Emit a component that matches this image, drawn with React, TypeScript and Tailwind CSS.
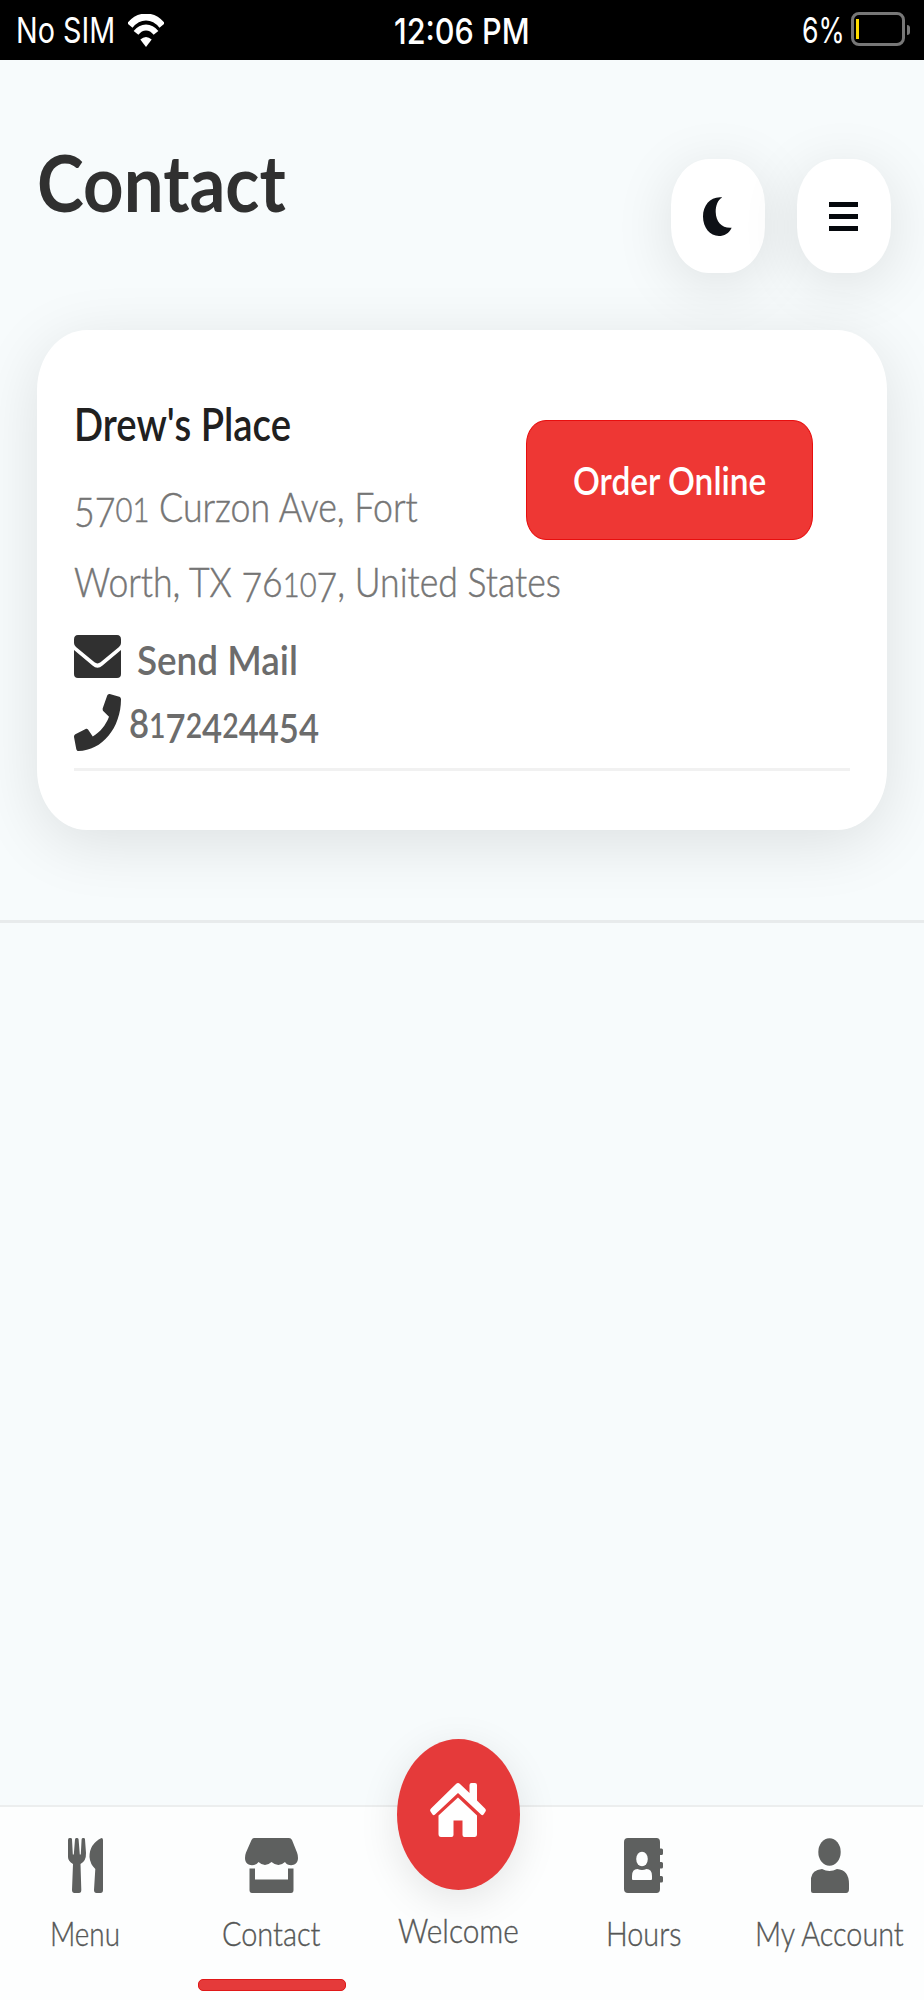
import { useLayoutEffect, useRef, type ReactNode } from "react";
import { FaPhone } from "react-icons/fa";
import clsx from "clsx";

// Condenses one line of text so that it fills the width of its box
function Fit({ className, children }: { className: string; children: ReactNode }) {
  const ref = useRef<HTMLSpanElement>(null);

  useLayoutEffect(() => {
    const el = ref.current;
    if (!el || !el.parentElement) return;
    el.style.transform = `scaleX(${el.parentElement.clientWidth / el.offsetWidth})`;
  });

  return (
    <div className={clsx("whitespace-nowrap", className)}>
      <span ref={ref} className="block w-max origin-left">
        {children}
      </span>
    </div>
  );
}

// Old-style figures: 0-2 sit at x-height, 3 4 5 7 9 hang below the baseline
function Digits({ value }: { value: string }) {
  return (
    <>
      {value.split("").map((d, i) => (
        <span
          key={i}
          className={clsx(
            "leading-[0]",
            "012".includes(d) && "text-[0.82em]",
            "34579".includes(d) && "align-[-0.13em]"
          )}
        >
          {d}
        </span>
      ))}
    </>
  );
}

function WifiIcon() {
  return (
    <svg viewBox="0 0 36 33" className="h-[33px] w-[36px]" fill="none" stroke="#fff">
      <path d="M1.8 11.5C11 .2 25 .2 34.2 11.5" strokeWidth="7" />
      <path d="M8 18.8C13.6 11.6 22.4 11.6 28 18.8" strokeWidth="6" />
      <path d="M12.3 25.5Q18 20.5 23.7 25.5L18 33Z" fill="#fff" stroke="none" />
    </svg>
  );
}

function MoonIcon() {
  return (
    <svg viewBox="0 0 29 39" className="mr-[2px] h-[39px] w-[29px]" fill="#0e1116">
      <path d="M19.300 .5C14.500 3 12.700 9 12.700 15C13 25 19 31.500 28.700 30.700C26 36.500 21 39 16 39C7 39 0 30.500 0 19.500C0 8 8 -1 19.300 .5Z" />
    </svg>
  );
}

function EnvelopeIcon() {
  return (
    <svg viewBox="0 0 47 43" className="h-[43px] w-[47px]" fill="#303030">
      <path d="M4 0H43Q47 0 47 4.5V8Q47 10.500 45 12L26.500 27.300Q23.500 29.500 20.500 27.300L2 12Q0 10.500 0 8V4.500Q0 0 4 0Z" />
      <path d="M0 15L18.500 30.500Q23.500 35 28.500 30.500L47 15V39Q47 43 43 43H4Q0 43 0 39Z" />
    </svg>
  );
}

function CutleryIcon() {
  return (
    <svg viewBox="0 0 35 55" className="h-[55px] w-[35px]" fill="#5e605f">
      <path d="M1.500 0H3Q4 0 4 1.500L4.800 16.500H5.800L7 1.500Q7 0 8.300 0H9.300Q10.500 0 10.600 1.500L11.800 16.500H12.800L13.600 1.500Q13.600 0 14.800 0H16Q17 0 17 1.500L18 15Q18.300 23 12.500 26L13.300 52Q13.300 55 11 55H6.500Q4 55 4 52L5 26Q0 23 0 19V2Q0 0 1.500 0Z" />
      <path d="M33.500 0Q35 0 35 2V52Q35 55 32.500 55H28.500Q26 55 26 52L27.300 31Q22 26 21.500 19Q21.300 6 33.500 0Z" />
    </svg>
  );
}

function StoreIcon() {
  return (
    <svg viewBox="0 0 53 55" className="h-[55px] w-[53px]" fill="#5e605f">
      <path d="M9 0H44Q46 0 47 2L52 14.500Q53 17 53 20C53 28.500 43 29 40 24Q33.500 30 26.500 24Q20 30 13.500 24C10 29 0 28.500 0 20Q0 17 1 14.500L6.500 2Q7.500 0 9 0Z" />
      <path d="M4.500 30.500H10V41.500H43V30.500H48.500V52Q48.500 55 46 55H7Q4.500 55 4.500 52Z" />
    </svg>
  );
}

function BookIcon() {
  return (
    <svg viewBox="0 0 39 55" className="h-[55px] w-[39px]" fill="#5e605f">
      <path d="M4 0H32.500Q36 0 36 4V10.500H37.500Q39 10.500 39 12V15.500Q39 17 37.500 17H36V24H37.500Q39 24 39 25.500V29Q39 30.500 37.500 30.500H36V38H37.500Q39 38 39 39.500V43Q39 44.500 37.500 44.500H36V51Q36 55 32.500 55H4Q0 55 0 51V4Q0 0 4 0Z" />
      <ellipse cx="18" cy="21" rx="5.800" ry="7.300" fill="#fdfefe" />
      <path d="M8 41V38Q8 31 13.500 31Q18 33 22.500 31Q28 31 28 38V41Q28 42 27 42H9Q8 42 8 41Z" fill="#fdfefe" />
    </svg>
  );
}

function PersonIcon() {
  return (
    <svg viewBox="0 0 38 55" className="h-[55px] w-[38px]" fill="#5e605f">
      <ellipse cx="18.500" cy="14" rx="11.200" ry="13.800" />
      <path d="M0 40Q1 32 11 31Q18.500 35 26 31Q38 32 38 46V51Q38 55 35 55H2Q0 55 0 53Z" />
    </svg>
  );
}

function HomeIcon() {
  return (
    <svg viewBox="0 0 56 54" className="h-[54px] w-[56px]" fill="#fff">
      <path d="M26 1Q28 -1 30 1L39.500 10V2Q39.500 0 41.500 0H45Q47 0 47 2V17.500L55 25.500Q56.500 27 55.500 28.500L53.500 31.500Q52.300 33 51 31.500L28 10L5 31.500Q3.700 33 2.500 31.500L.5 28.500Q-.5 27 1 25.500Z" />
      <path d="M28 14.500L47 32.500V51Q47 54 44.500 54H34.500Q32.500 54 32.500 52V37.500H23.500V52Q23.500 54 21.500 54H11Q8.500 54 8.500 51V32.500Z" />
    </svg>
  );
}

const roundButton =
  "flex h-[114px] w-[94px] items-center justify-center rounded-[38px/46px] bg-white shadow-[0_11px_60px_rgba(0,0,0,0.11)]";

const addressText =
  "text-[41px] leading-[75px] font-light text-[#757575] [-webkit-text-stroke:0.5px_#757575]";

const navItems = [
  { label: "Menu", icon: <CutleryIcon />, width: "w-[70px]" },
  { label: "Contact", icon: <StoreIcon />, width: "w-[98px]", active: true },
  { label: "Welcome", icon: <HomeIcon />, width: "w-[121px]", home: true },
  { label: "Hours", icon: <BookIcon />, width: "w-[75px]" },
  { label: "My Account", icon: <PersonIcon />, width: "w-[149px]" },
];

export default function App() {
  return (
    <div className="flex h-[2000px] w-[924px] flex-col overflow-hidden bg-[#f7fbfc] font-['Lato',sans-serif]">
      <div className="flex h-[60px] shrink-0 justify-between bg-black pr-[14px] pl-[16px] font-['Inter',sans-serif] text-[36px] leading-[62px] text-white">
        <div className="flex w-[370px] items-center gap-[13px]">
          <Fit className="w-[99px]">No SIM</Fit>
          <WifiIcon />
        </div>
        <Fit className="w-[136px] -translate-x-px font-medium">12:06 PM</Fit>
        <div className="flex w-[370px] items-center justify-end">
          <Fit className="w-[43px]">6%</Fit>
          <div className="ml-[6px] flex h-[34px] w-[54px] -translate-y-px items-center rounded-[8px] border-[3px] border-[#777] pl-[2px]">
            <div className="h-[20px] w-[3px] bg-[#ffdc00]" />
          </div>
          <div className="ml-[2px] h-[10px] w-[3px] rounded-r-full bg-[#777]" />
        </div>
      </div>

      <header className="flex h-[270px] shrink-0 justify-between pr-[33px] pl-[37px]">
        <Fit className="mt-[74px] w-[249px] text-[79px] leading-[96px] font-bold text-[#303030]">Contact</Fit>
        <div className="mt-[99px] flex gap-8">
          <button className={roundButton}>
            <MoonIcon />
          </button>
          <button className={roundButton}>
            <span className="mr-px flex w-[29px] flex-col gap-[7px]">
              <span className="h-[5px] bg-[#05080c]" />
              <span className="h-[5px] bg-[#05080c]" />
              <span className="h-[5px] bg-[#05080c]" />
            </span>
          </button>
        </div>
      </header>

      <section className="mx-[37px] h-[500px] shrink-0 rounded-[50px/60px] bg-white px-[37px] pt-[62px] shadow-[0_13px_64px_rgba(0,0,0,0.11)]">
        <div className="flex justify-between pr-[37px]">
          <div>
            <Fit className="w-[217px] translate-y-px text-[47px] leading-[60px] font-semibold text-[#202020]">Drew's Place</Fit>
            <Fit className={clsx("mt-[16px] w-[344px] translate-y-px", addressText)}>
              <Digits value="5701" /> Curzon Ave, Fort
            </Fit>
          </div>
          <button className="mt-[28px] flex h-[120px] w-[287px] justify-center rounded-[20px/24px] border border-[#e80e0e] bg-[#ee3734] pt-[29px] text-[39px] leading-[60px] font-semibold text-white">
            <Fit className="w-[193px]">Order Online</Fit>
          </button>
        </div>
        <Fit className={clsx("w-[487px] translate-y-px", addressText)}>
          Worth, TX <Digits value="76107" />, United States
        </Fit>
        <div className="mt-[17px] flex h-[43px] items-center gap-[16px] text-[#6c6c6c]">
          <EnvelopeIcon />
          <Fit className="mt-[6px] w-[161px] text-[41px] leading-[50px] font-semibold">Send Mail</Fit>
        </div>
        <div className="mt-[16px] flex h-[57px] items-center gap-[8px] text-[#6c6c6c]">
          <FaPhone className="h-[57px] w-[47px] text-[#303030]" preserveAspectRatio="none" />
          <Fit className="w-[190px] text-[41px] leading-[50px] font-semibold">
            <Digits value="8172424454" />
          </Fit>
        </div>
        <hr className="mt-[17px] border-t-[3px] border-[#f1f1f1]" />
      </section>

      <hr className="mt-[90px] shrink-0 border-t-[3px] border-[#e8ebec]" />

      <nav className="mt-auto -ml-2 grid h-[195px] w-[931px] shrink-0 grid-cols-5 border-t-[2px] border-[#eceeee] bg-[#fdfefe] text-[33px] leading-[40px] font-light text-[#555756] shadow-[1px_0_0_#fdfefe] [-webkit-text-stroke:0.4px_#555756]">
        {navItems.map((item) => (
          <div key={item.label} className={clsx("flex flex-col items-center", item.home && "translate-x-px")}>
            {item.home ? (
              <div className="-mt-[68px] flex h-[151px] w-[123px] items-center justify-center rounded-[50%] bg-[#e53a3a] pb-[10px] shadow-[0_10px_40px_rgba(0,0,0,0.1)]">
                {item.icon}
              </div>
            ) : (
              <div className="mt-[31px]">{item.icon}</div>
            )}
            <Fit className={clsx(item.home ? "mt-[20px]" : "mt-[20px]", item.width)}>{item.label}</Fit>
            {item.active && (
              <div className="mt-[26px] h-[12px] w-[148px] translate-x-px rounded-[5px] border border-[#e01818] bg-[#e53a3a]" />
            )}
          </div>
        ))}
      </nav>
    </div>
  );
}
